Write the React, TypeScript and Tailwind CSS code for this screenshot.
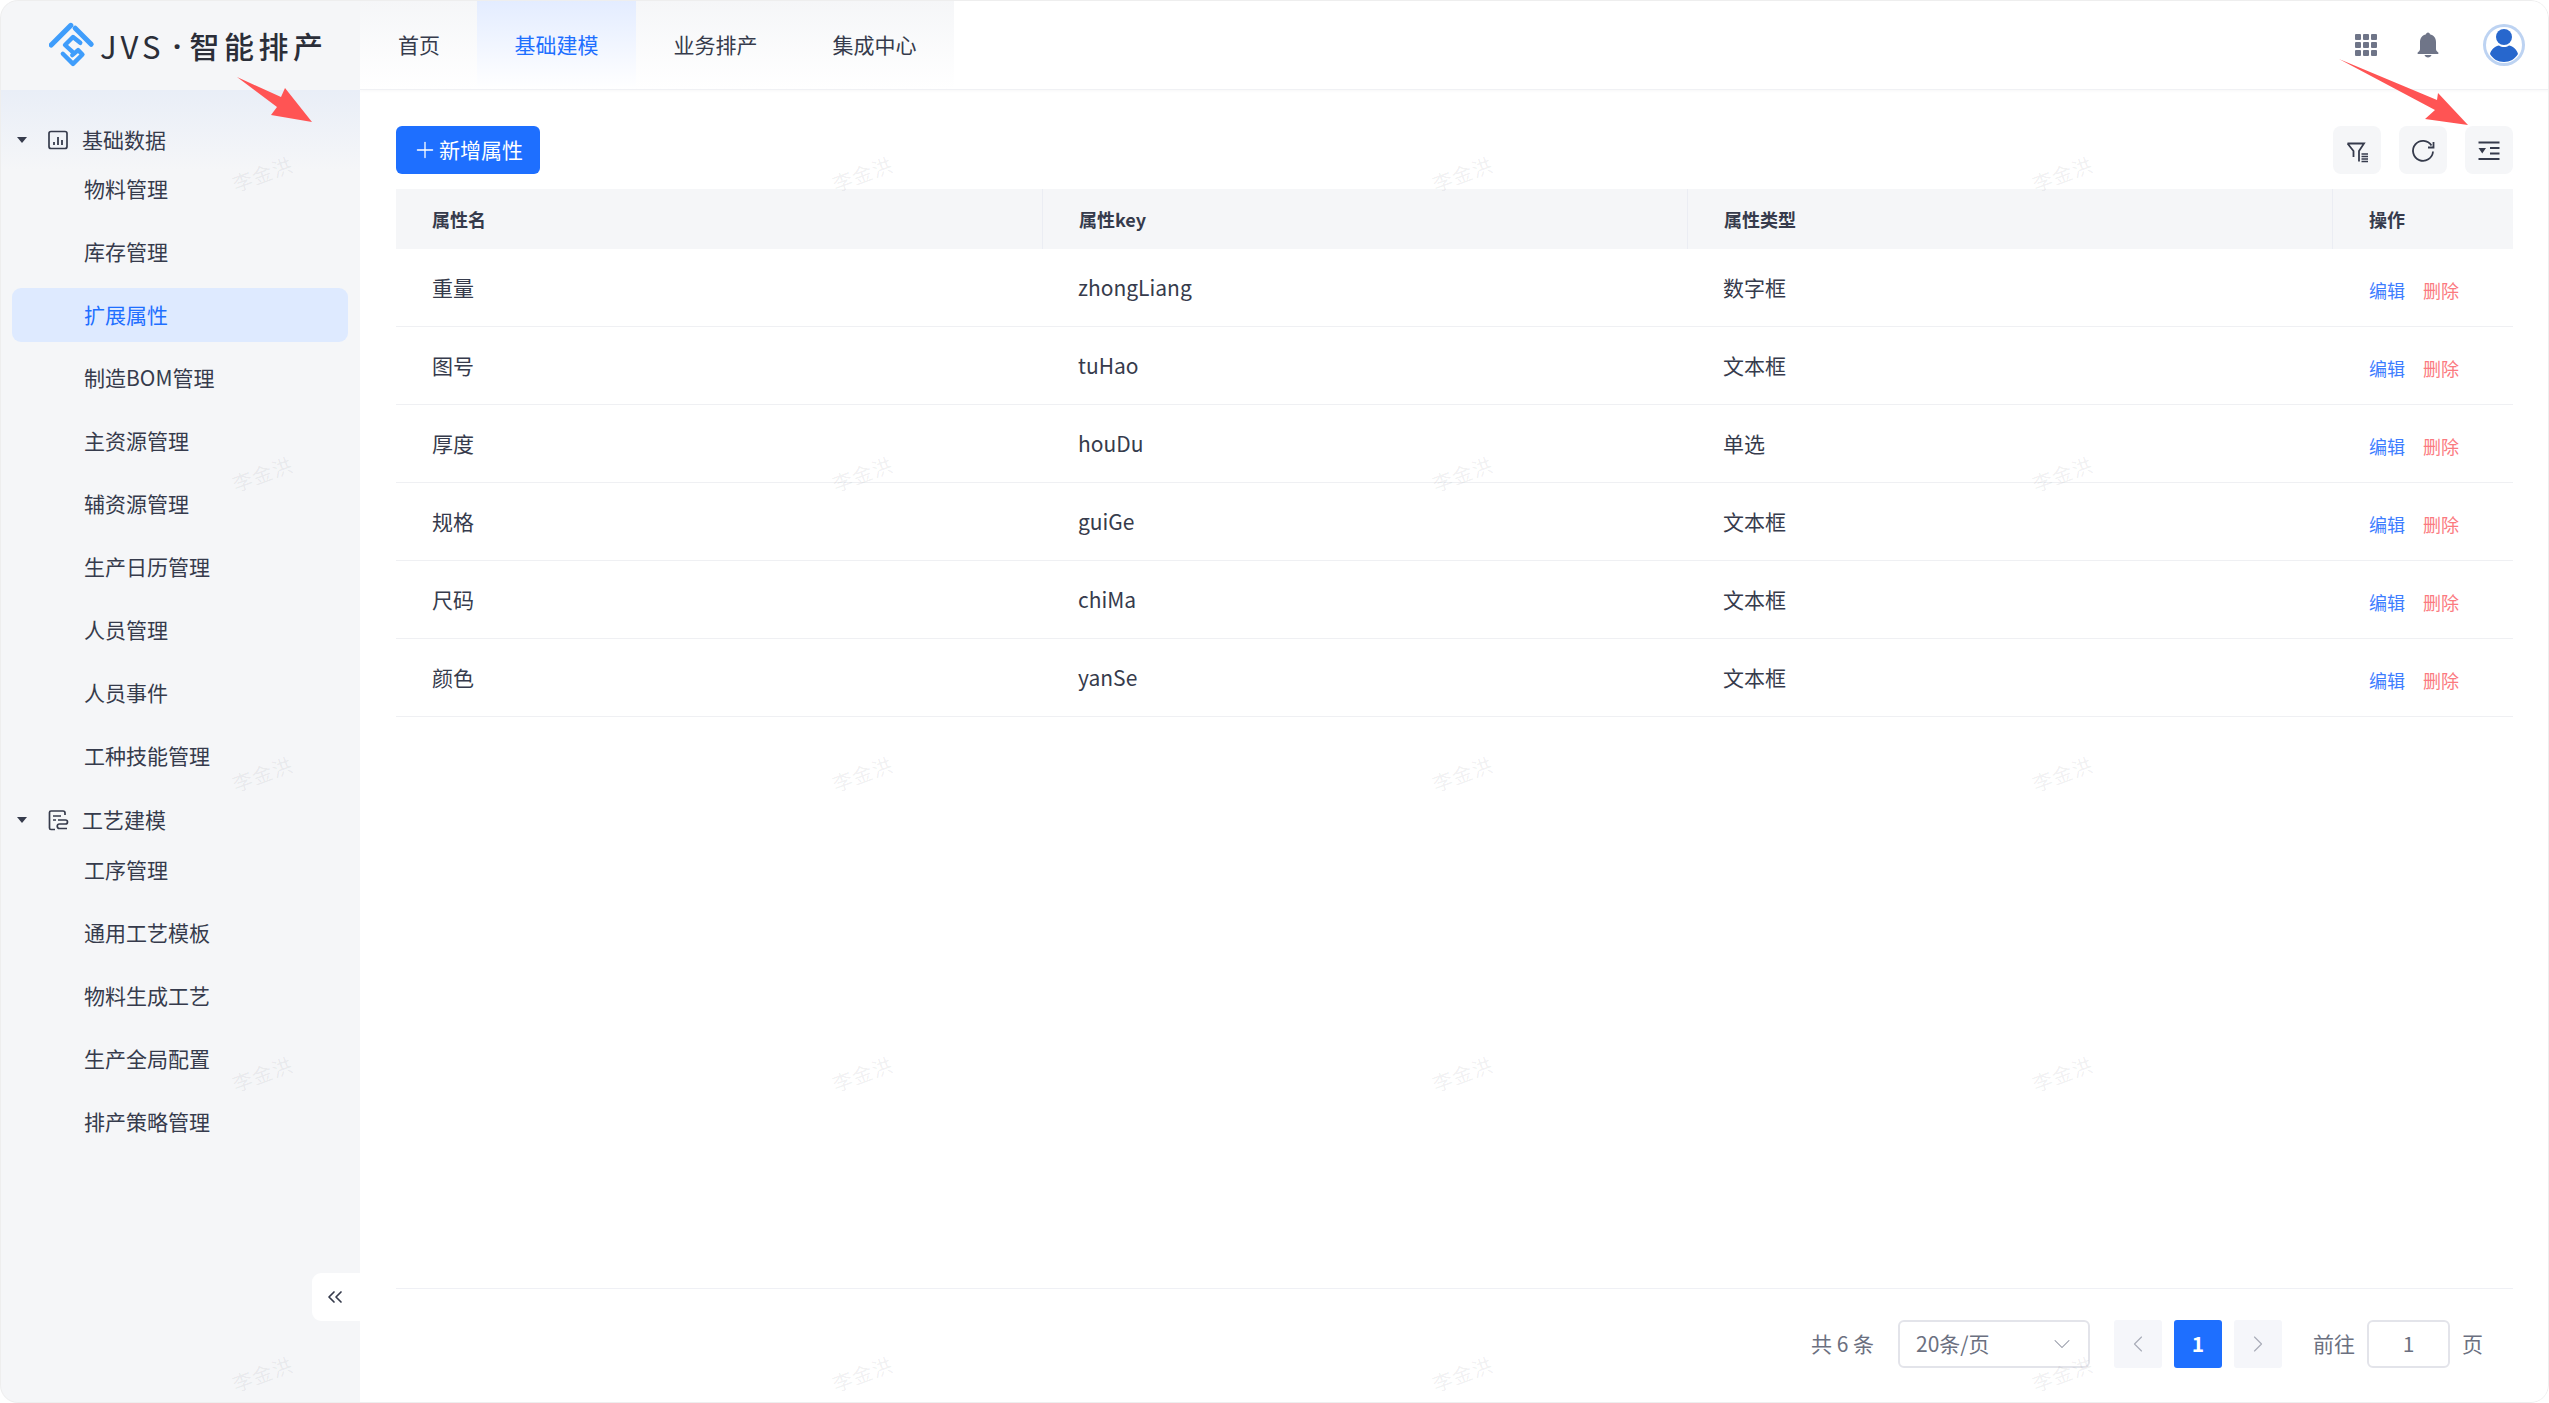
import React from 'react'
import { ChevronDown, ChevronLeft, ChevronRight, ChevronsLeft, Plus } from 'lucide-react'

const menuGroups = [
    {
        title: '基础数据',
        icon: 'chart',
        items: ['物料管理', '库存管理', '扩展属性', '制造BOM管理', '主资源管理', '辅资源管理', '生产日历管理', '人员管理', '人员事件', '工种技能管理'],
    },
    {
        title: '工艺建模',
        icon: 'flow',
        items: ['工序管理', '通用工艺模板', '物料生成工艺', '生产全局配置', '排产策略管理'],
    },
]

const rows = [
    { name: '重量', key: 'zhongLiang', type: '数字框' },
    { name: '图号', key: 'tuHao', type: '文本框' },
    { name: '厚度', key: 'houDu', type: '单选' },
    { name: '规格', key: 'guiGe', type: '文本框' },
    { name: '尺码', key: 'chiMa', type: '文本框' },
    { name: '颜色', key: 'yanSe', type: '文本框' },
]

const navItems = ['首页', '基础建模', '业务排产', '集成中心']

const Logo = () => (
    <svg width="48" height="48" viewBox="0 0 66 66" fill="none" stroke="#3f9dfb" strokeLinecap="round" strokeLinejoin="round">
        <path d="M3 33 L30 6" strokeWidth="7" />
        <path d="M36 10 L58 32" strokeWidth="7" />
        <path d="M43 30 L33 22 L22 33 L32 42" strokeWidth="6" />
        <path d="M19 45 L33 59 L46 46 L40 40 L32 47" strokeWidth="6" />
    </svg>
)

const GroupIcon = ({ name }: { name: string }) =>
    name === 'chart' ? (
        <svg width="22" height="22" viewBox="0 0 22 22" fill="none" stroke="#363b4c">
            <rect x="2" y="2.5" width="18" height="17" rx="2" strokeWidth="1.7" />
            <path d="M7 16v-3M11 16V8M15 16v-5" strokeWidth="1.8" />
        </svg>
    ) : (
        <svg width="22" height="22" viewBox="0 0 22 22" fill="none" stroke="#363b4c" strokeWidth="1.7">
            <path d="M8 20.500H4a1.500 1.500 0 0 1-1.500-1.500V3.500A1.500 1.500 0 0 1 4 2h12a2 2 0 0 1 2 2v2" />
            <path d="M6 7h8M6 11h3" />
            <path d="M11 11h7.500a1.500 1.500 0 0 1 0 4H12.500a1.800 1.800 0 0 0 0 4.500H20" />
        </svg>
    )

const Watermarks = () => (
    <div className="pointer-events-none absolute inset-0 overflow-hidden">
        <div className="ml-[-38px] mt-[24px] grid grid-cols-[repeat(4,600px)] auto-rows-[300px]">
            {Array.from({ length: 20 }).map((_, i) => (
                <div key={i} className="flex items-center justify-center">
                    <span className="-rotate-[20deg] text-[20px] tracking-[1px] text-[#363b4c]/[0.08]">李金洪</span>
                </div>
            ))}
        </div>
    </div>
)

const Sidebar = () => (
    <aside className="relative flex w-[360px] shrink-0 flex-col bg-[#f5f6f8]">
        <div className="flex h-[90px] items-center pl-[49px]">
            <Logo />
            <span className="ml-[3px] text-[31px] leading-none tracking-[4px] text-[#2b2e38]">JVS</span>
            <span className="w-[25px] text-center font-['Noto_Sans'] text-[29px] font-bold leading-none text-[#2b2e38]">·</span>
            <span className="text-[30px] font-medium leading-none tracking-[4.500px] text-[#2b2e38]">智能排产</span>
        </div>
        <nav className="flex-1 bg-[linear-gradient(180deg,#e9eef7_0,#f5f6f8_80px)] pt-[29px]">
            {menuGroups.map((group, idx) => (
                <div key={group.title} className={idx > 0 ? 'mt-[16px]' : ''}>
                    <div className="flex h-[42px] items-center pl-[17px] text-[21px] text-[#363b4c]">
                        <span className="h-0 w-0 border-x-[5.500px] border-t-[6px] border-x-transparent border-t-[#363b4c]" />
                        <span className="ml-[20px] flex"><GroupIcon name={group.icon} /></span>
                        <span className="ml-[13px]">{group.title}</span>
                    </div>
                    <ul className={idx > 0 ? 'pt-[2px]' : 'pt-[1px]'}>
                        {group.items.map((item) => (
                            <li
                                key={item}
                                className={
                                    item === '扩展属性'
                                        ? 'mx-[12px] mb-[9px] flex h-[54px] items-center rounded-[9px] bg-[#deeaff] pl-[72px] text-[21px] text-[#1e6fff]'
                                        : 'mx-[12px] mb-[9px] flex h-[54px] items-center pl-[72px] text-[21px] text-[#363b4c]'
                                }
                            >
                                {item}
                            </li>
                        ))}
                    </ul>
                </div>
            ))}
        </nav>
        <button className="absolute bottom-[82px] right-0 flex h-[48px] w-[48px] items-center justify-center rounded-l-[9px] bg-white text-[#363b4c]">
            <ChevronsLeft size={24} strokeWidth={1.7} className="mr-[2px]" />
        </button>
    </aside>
)

const Header = () => (
    <header className="flex h-[90px] shrink-0 items-stretch justify-between border-b border-[#f0f1f4] shadow-[0_1px_3px_rgba(54,59,76,0.04)]">
        <div className="flex w-[594px] bg-[linear-gradient(180deg,#f5f6f8_0,#ffffff_100%)]">
            {navItems.map((item, i) => (
                <div
                    key={item}
                    className={
                        i === 0
                            ? 'flex w-[117px] items-center pl-[38px] text-[21px] text-[#363b4c]'
                            : i === 1
                                ? 'flex w-[159px] items-center justify-center bg-[linear-gradient(180deg,#e3ecff_0,#ffffff_100%)] text-[21px] text-[#1e6fff]'
                                : 'flex w-[159px] items-center justify-center text-[21px] text-[#363b4c]'
                    }
                >
                    {item}
                </div>
            ))}
        </div>
        <div className="flex items-center pr-[24px]">
            <svg width="22" height="22" viewBox="0 0 22 22" fill="#6f7588" className="mr-[1px]">
                <rect x="0" y="0" width="6" height="6" rx="1" />
                <rect x="8" y="0" width="6" height="6" rx="1" />
                <rect x="16" y="0" width="6" height="6" rx="1" />
                <rect x="0" y="8" width="6" height="6" rx="1" />
                <rect x="8" y="8" width="6" height="6" rx="1" />
                <rect x="16" y="8" width="6" height="6" rx="1" />
                <rect x="0" y="16" width="6" height="6" rx="1" />
                <rect x="8" y="16" width="6" height="6" rx="1" />
                <rect x="16" y="16" width="6" height="6" rx="1" />
            </svg>
            <svg className="ml-[39px]" width="22" height="26" viewBox="0 0 22 26" fill="#6f7588">
                <path d="M11 0.500c1 0 1.800.8 1.900 1.700C16.700 3.100 19 6 19 10v7c0 1.500.7 2.400 2 3.200.7.400.9 1.800-.4 1.800H1.400c-1.300 0-1.100-1.400-.4-1.800C2.300 19.400 3 18.500 3 17v-7c0-4 2.300-6.900 6.100-7.800C9.200 1.300 10 .5 11 .5z" />
                <path d="M7.500 23h7c-.4 1.500-1.800 2.500-3.500 2.500S7.900 24.500 7.500 23z" />
            </svg>
            <svg className="ml-[44px]" width="42" height="42" viewBox="0 0 42 42">
                <circle cx="21" cy="21" r="21" fill="#bdd3f2" />
                <circle cx="21" cy="21" r="18" fill="#ffffff" />
                <circle cx="21" cy="13" r="8" fill="#2767cd" />
                <path d="M7 30c1-5 6-8 9-8.500 3 2 7 2 10 0 3 .5 8 3.500 9 8.500-3 5-8 8-14 8s-11-3-14-8z" fill="#2767cd" />
            </svg>
        </div>
    </header>
)

const Toolbar = () => (
    <div className="flex h-[48px] items-center justify-between">
        <button className="flex h-[48px] w-[144px] items-center justify-center rounded-[6px] bg-[#1e6fff] text-[21px] text-white">
            <Plus size={26} strokeWidth={1.200} className="mr-[1px] ml-[-1px]" />
            新增属性
        </button>
        <div className="flex gap-[18px] text-[#363b4c]">
            <button className="flex h-[48px] w-[48px] rounded-[8px] bg-[#f5f6f8]">
                <svg width="48" height="48" viewBox="0 0 48 48" fill="none" stroke="currentColor" strokeWidth="1.800">
                    <path d="M14.500 17.500H31L26 25v10.500M14.500 17.500L20.500 25v6" />
                    <path d="M28.500 28H35M28.500 30.500H35M28.500 33H35M28.500 35.500H35" strokeWidth="1.300" />
                </svg>
            </button>
            <button className="flex h-[48px] w-[48px] rounded-[8px] bg-[#f5f6f8]">
                <svg width="48" height="48" viewBox="0 0 48 48" fill="none" stroke="currentColor" strokeWidth="1.800">
                    <path d="M32.500 19.500A10 10 0 1 0 34 25.500" />
                    <path d="M34.500 16v5.500H29" />
                </svg>
            </button>
            <button className="flex h-[48px] w-[48px] rounded-[8px] bg-[#f5f6f8]">
                <svg width="48" height="48" viewBox="0 0 48 48" fill="none" stroke="currentColor" strokeWidth="2">
                    <path d="M13.500 16.500H34.500M25 22H34.500M25 27.500H34.500M13.500 33H34.500" />
                    <path d="M13.500 22h7.500l-3.750 5.500z" fill="currentColor" stroke="none" />
                </svg>
            </button>
        </div>
    </div>
)

const AttrTable = () => (
    <div className="mt-[15px] flex-1">
        <div className="grid h-[60px] grid-cols-[646px_645px_645px_181px] items-center bg-[#f5f6f8] text-[18px] font-bold text-[#363b4c]">
            <div className="pl-[36px]">属性名</div>
            <div className="flex h-full items-center border-l border-[#ebedf3] pl-[36px]">属性key</div>
            <div className="flex h-full items-center border-l border-[#ebedf3] pl-[36px]">属性类型</div>
            <div className="flex h-full items-center border-l border-[#ebedf3] pl-[36px]">操作</div>
        </div>
        {rows.map((row) => (
            <div key={row.key} className="grid h-[78px] grid-cols-[646px_645px_645px_181px] items-center border-b border-[#eff0f3] text-[21px] text-[#363b4c]">
                <div className="pl-[36px]">{row.name}</div>
                <div className="pl-[36px]">{row.key}</div>
                <div className="pl-[36px]">{row.type}</div>
                <div className="flex gap-[18px] pl-[37px] pt-[5px] text-[18px]">
                    <span className="text-[#3d7dff]">编辑</span>
                    <span className="text-[#fb7a80]">删除</span>
                </div>
            </div>
        ))}
    </div>
)

const Pagination = () => (
    <div className="flex h-[115px] shrink-0 items-center justify-end border-t border-[#eff0f5] pb-[5px] pr-[30px] text-[21px] text-[#6b7080]">
        <span className="mr-[24px]">共 6 条</span>
        <div className="flex h-[48px] w-[192px] items-center justify-between rounded-[6px] border-2 border-[#e3e4ea] pl-[16px] pr-[12px]">
            <span>20条/页</span>
            <ChevronDown size={28} strokeWidth={0.9} className="text-[#8f93a2]" />
        </div>
        <div className="ml-[24px] flex h-[48px] w-[48px] items-center justify-center rounded-[3px] bg-[#f5f6fa] text-[#a9acb8]">
            <ChevronLeft size={28} strokeWidth={1} />
        </div>
        <div className="ml-[12px] flex h-[48px] w-[48px] items-center justify-center rounded-[3px] bg-[#1e6fff] font-bold text-white">1</div>
        <div className="ml-[12px] flex h-[48px] w-[48px] items-center justify-center rounded-[3px] bg-[#f5f6fa] text-[#a9acb8]">
            <ChevronRight size={28} strokeWidth={1} />
        </div>
        <span className="ml-[31px]">前往</span>
        <div className="ml-[12px] flex h-[48px] w-[83px] items-center justify-center rounded-[6px] border-2 border-[#e3e4ea]">1</div>
        <span className="ml-[12px]">页</span>
    </div>
)

const App = () => {
    return (
        <div
            className="relative flex h-[1403px] w-[2549px] overflow-hidden rounded-[18px] bg-white"
            style={{ fontFamily: '"Noto Sans CJK SC", "Noto Sans", sans-serif' }}
        >
            <Sidebar />
            <main className="flex min-w-0 flex-1 flex-col">
                <Header />
                <div className="flex flex-1 flex-col px-[36px] pt-[36px]">
                    <Toolbar />
                    <AttrTable />
                    <Pagination />
                </div>
            </main>
            <Watermarks />
            {/* annotation arrows drawn on top of the screenshot */}
            <svg className="pointer-events-none absolute left-0 top-0" width="2549" height="1403" fill="#ff5454">
                <polygon points="237,77 281,97 285,88 312,122 271,115 277,107" />
                <polygon points="2339,59 2437,100 2438,93 2468,125 2425,119 2435,110" />
            </svg>
            <div className="pointer-events-none absolute inset-0 rounded-[18px] border border-[#eeeeee]" />
        </div>
    )
}

export default App
